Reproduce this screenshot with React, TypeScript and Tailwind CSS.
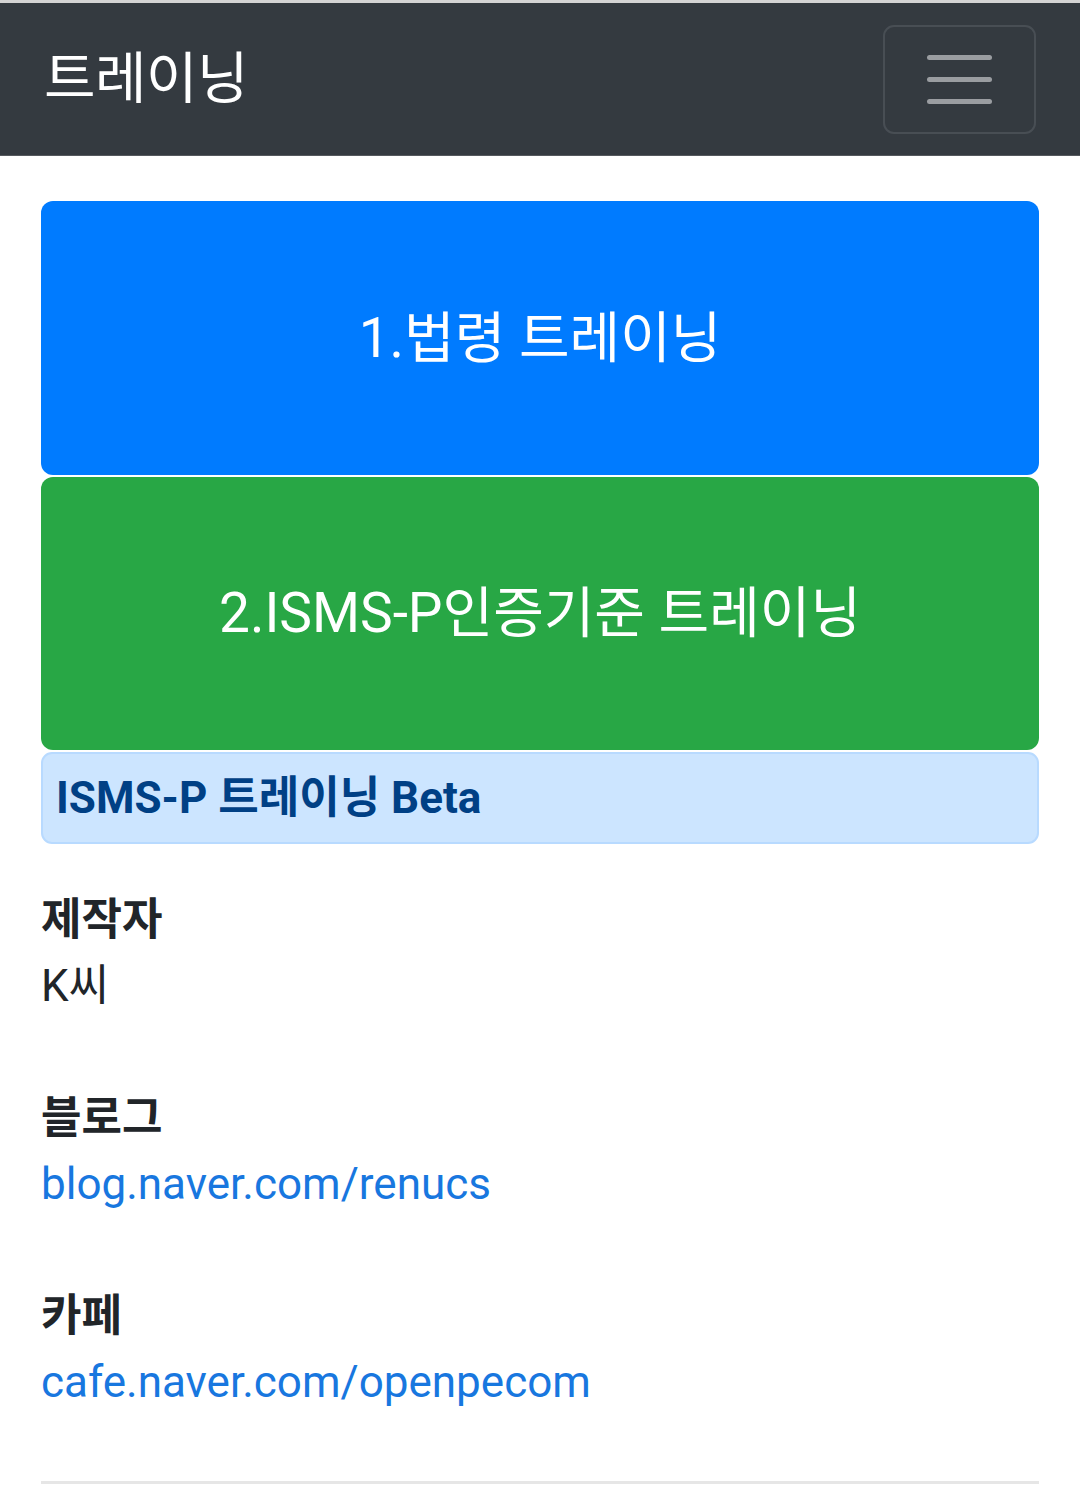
import React from "react";

const KR = { fontFamily: 'Roboto, "Noto Sans CJK KR", "Noto Sans", sans-serif' };

export default function App() {
  return (
    <div className="w-[1080px] min-h-[1506px] bg-white" style={KR}>
      <div className="h-[3px] bg-[#d4d4d4]" />
      <nav className="h-[153px] bg-[#343a40] border-b border-[#55595e] flex items-center justify-between pl-[44px] pr-[44px]">
        <span className="text-white text-[56px] leading-none tracking-[-0.5px]">트레이닝</span>
        <button className="w-[153px] h-[109px] mt-[1px] rounded-[11px] border-2 border-[#484e54] flex flex-col items-center justify-center gap-[17px]">
          <span className="block w-[65px] h-[5px] rounded-full bg-[#9a9da1]" />
          <span className="block w-[65px] h-[5px] rounded-full bg-[#9a9da1]" />
          <span className="block w-[65px] h-[5px] rounded-full bg-[#9a9da1]" />
        </button>
      </nav>

      <main className="px-[41px] pt-[45px]">
        <div className="flex flex-col gap-[2px]">
          <button className="h-[274px] w-full rounded-[12px] bg-[#007bff] text-white text-[55px] flex items-center justify-center">
            1.법령 트레이닝
          </button>
          <button className="h-[273px] w-full rounded-[12px] bg-[#28a745] text-white text-[55px] flex items-center justify-center">
            2.ISMS-P인증기준 트레이닝
          </button>
          <div className="h-[92px] w-full rounded-[11px] bg-[#cce5ff] border-2 border-[#b8daff] flex items-center px-[13px]">
            <span className="text-[#004085] text-[44px] font-bold leading-none">ISMS-P 트레이닝 Beta</span>
          </div>
        </div>

        <div className="pt-[43px] text-[#212529] text-[44px] leading-[66px]">
          <div className="font-bold text-[44px]">제작자</div>
          <div>K씨</div>
          <div className="h-[66px]" />
          <div className="font-bold text-[44px]">블로그</div>
          <div className="text-[#1877df]">blog.naver.com/renucs</div>
          <div className="h-[66px]" />
          <div className="font-bold text-[44px]">카페</div>
          <div className="text-[#1877df]">cafe.naver.com/openpecom</div>
          <div className="h-[66px]" />
        </div>
        <hr className="border-0 h-[3px] bg-[#e6e6e6]" />
      </main>
    </div>
  );
}
